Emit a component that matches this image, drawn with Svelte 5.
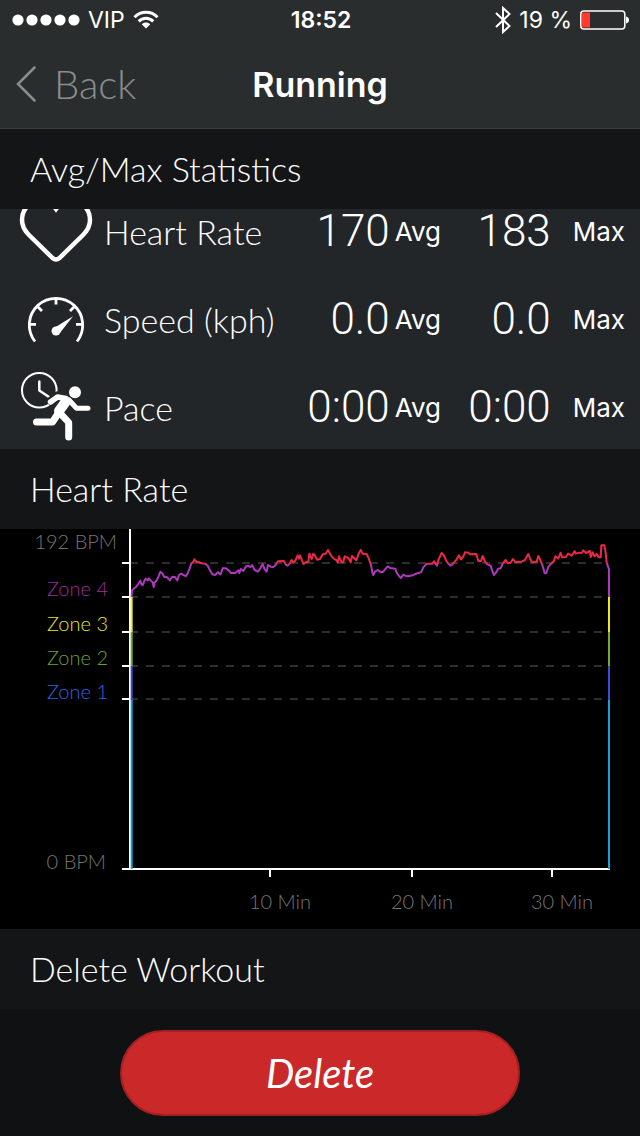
<script>
	const stats = [
		{ icon: 'heart', name: 'Heart Rate', avg: '170', max: '183' },
		{ icon: 'gauge', name: 'Speed (kph)', avg: '0.0', max: '0.0' },
		{ icon: 'runner', name: 'Pace', avg: '0:00', max: '0:00' }
	];

	const zones = [
		{ name: 'Zone 4', y: 67, color: '#9a2f9f' },
		{ name: 'Zone 3', y: 102, color: '#e4e62b' },
		{ name: 'Zone 2', y: 136, color: '#69a52c' },
		{ name: 'Zone 1', y: 170, color: '#2f62e8' }
	];
	const lines = [34, 68, 103, 137, 170];
	const minutes = [
		{ label: '10 Min', x: 270 },
		{ label: '20 Min', x: 412 },
		{ label: '30 Min', x: 552 }
	];

	// time, level: three steps to one chart unit
	const samples = [
		[5, 1014], [5, 195], [6, 178], [12, 172], [18, 168], [24, 160], [31, 149], [34, 160], [38, 162], [43, 150],
		[47, 143], [53, 148], [57, 142], [63, 150], [68, 153], [71, 168], [74, 155], [80, 148], [85, 138], [91, 122],
		[97, 127], [103, 138], [110, 138], [120, 148], [127, 137], [135, 138], [142, 148], [147, 132], [154, 128],
		[160, 132], [168, 135], [174, 125], [179, 112], [184, 97], [189, 94], [193, 85], [199, 92], [206, 93],
		[214, 97], [226, 98], [233, 104], [240, 118], [247, 130], [255, 132], [264, 124], [272, 130], [278, 112],
		[288, 112], [296, 118], [303, 126], [316, 126], [325, 118], [328, 126], [332, 114], [340, 120], [348, 106],
		[355, 105], [362, 108], [366, 102], [374, 117], [384, 122], [391, 112], [398, 99], [403, 113], [410, 122],
		[414, 102], [422, 107], [430, 108], [437, 102], [444, 91], [462, 90], [467, 101], [473, 104], [479, 98],
		[485, 87], [490, 94], [496, 89], [503, 73], [507, 83], [510, 73], [516, 88], [521, 99], [528, 93], [535, 93],
		[538, 68], [545, 84], [550, 68], [555, 74], [561, 86], [570, 84], [578, 70], [587, 68], [594, 57], [600, 68],
		[605, 76], [613, 84], [620, 88], [623, 95], [627, 76], [635, 94], [640, 93], [644, 76], [655, 81], [662, 94],
		[666, 75], [675, 84], [679, 88], [685, 70], [692, 57], [698, 68], [710, 69], [716, 82], [723, 102],
		[727, 125], [730, 132], [735, 122], [743, 117], [753, 124], [760, 122], [766, 114], [773, 106], [780, 111],
		[796, 113], [800, 125], [807, 135], [813, 141], [820, 131], [827, 135], [835, 136], [848, 133], [858, 128],
		[873, 124], [880, 109], [890, 98], [907, 98], [912, 91], [921, 104], [926, 85], [935, 66], [942, 73],
		[947, 86], [954, 97], [963, 104], [972, 95], [980, 85], [987, 73], [993, 85], [1000, 76], [1005, 64],
		[1015, 65], [1020, 70], [1039, 69], [1045, 90], [1053, 90], [1058, 75], [1065, 92], [1072, 100], [1082, 104],
		[1087, 120], [1092, 132], [1100, 122], [1104, 113], [1112, 112], [1118, 98], [1127, 87], [1133, 97],
		[1142, 95], [1149, 84], [1156, 93], [1175, 92], [1185, 87], [1195, 69], [1201, 84], [1206, 94], [1220, 92],
		[1225, 75], [1233, 92], [1239, 108], [1244, 127], [1249, 126], [1255, 108], [1263, 98], [1272, 90],
		[1276, 76], [1285, 82], [1292, 65], [1296, 79], [1308, 78], [1314, 68], [1325, 74], [1334, 60], [1337, 68],
		[1347, 65], [1355, 66], [1360, 58], [1368, 66], [1380, 60], [1382, 78], [1388, 64], [1393, 76], [1400, 69],
		[1406, 79], [1412, 79], [1414, 43], [1423, 43], [1427, 65], [1430, 95], [1437, 115], [1437, 1014]
	];
	const points = samples.map(([t, v]) => `${130 + t / 3},${2 + v / 3}`).join(' ');
</script>

<div class="screen">
	<header>
		<div class="status">
			<div class="carrier">
				<svg width="68" height="12" viewBox="0 0 68 12" fill="#fff" aria-hidden="true">
					{#each [0, 1, 2, 3, 4] as dot}
						<circle cx={6 + dot * 14} cy="6" r="5.6" />
					{/each}
				</svg>
				<span>VIP</span>
				<svg width="26" height="20" viewBox="0 0 26 20" fill="none" stroke="#fff" stroke-width="3" aria-hidden="true">
					<path d="M1.5 7.2C8 .7 18 .7 24.500 7.200" />
					<path d="M5.700 11.400C10 7.200 16 7.200 20.300 11.400" />
					<path d="M8.700 14.300C11.200 12 14.800 12 17.300 14.300L13 18.600Z" fill="#fff" stroke="none" />
				</svg>
			</div>
			<strong>18:52</strong>
			<div class="power">
				<svg width="16" height="28" viewBox="0 0 16 28" fill="none" stroke="#fff" stroke-width="2" aria-hidden="true">
					<path d="M1 7L14.500 20L8 26V2L14.500 8L1 21" />
				</svg>
				<span>19 %</span>
				<svg width="50" height="20" viewBox="0 0 50 20" aria-hidden="true">
					<rect x=".8" y="1" width="44" height="18" rx="3" fill="none" stroke="#fff" stroke-width="1.500" />
					<rect x="2" y="2.500" width="8" height="15" fill="#ff3b30" />
					<path d="M46 6.500C50 7 50 13 46 13.500Z" fill="#fff" />
				</svg>
			</div>
		</div>
		<nav>
			<button class="back" type="button">
				<svg width="20" height="36" viewBox="0 0 20 36" fill="none" stroke="#8b8e8f" stroke-width="2.500" stroke-linecap="round" aria-hidden="true">
					<path d="M18.500 1.500L2 18L18.500 34.500" />
				</svg>
				Back
			</button>
			<h1>Running</h1>
		</nav>
	</header>

	<h2>Avg/Max Statistics</h2>
	<div class="stats">
		<table>
			<tbody>
				{#each stats as stat}
					<tr>
						<td class="icon">
							<svg width="80" height="88" viewBox="0 0 80 88" fill="none" stroke="#fff" aria-hidden="true">
								{#if stat.icon === 'heart'}
									<path stroke-width="4.500" d="M36.500 71L13 48C7 42 6 38 6 33C6 22 14 14 24 14C31 14 37 18 40 22C43 18 49 14 56 14C66 14 74 22 74 33C74 38 73 42 67 48L43.500 71Q40 74 36.500 71Z" />
								{:else if stat.icon === 'gauge'}
									<path stroke-width="2.800" d="M19 66.500A26.700 26.700 0 1 1 61 66.500" />
									<path stroke-width="2.800" d="M14 49.300H20M60 49.300H66M40 23V29.500M21.500 31.500L26 36M58.500 31.500L54 36" />
									<path fill="#fff" stroke="none" d="M57 41.300L43.500 58.500L38 53Z" />
									<circle cx="40" cy="56" r="4.500" fill="#fff" stroke="none" />
								{:else}
									<circle cx="23.300" cy="27.300" r="17.300" stroke-width="2" />
									<path stroke-width="2.500" stroke-linecap="round" stroke-linejoin="round" d="M23.300 18.500V27.500L33 34" />
									<path stroke="#232629" stroke-width="9" d="M32 40.500L41.500 33L46 32" />
									<g stroke-linecap="round" stroke-linejoin="round">
										<path stroke-width="5.500" d="M34.500 39L41.500 34L50 35.500" />
										<path stroke-width="5" d="M53 37L60.500 45.300H72" />
										<path stroke-width="10" d="M49.500 39L43 48" />
										<path stroke-width="7" d="M42.500 50L36.500 59H20.500" />
										<path stroke-width="7" d="M44 50L52.700 59.500V74" />
									</g>
									<circle cx="59" cy="29.300" r="6" fill="#fff" stroke="none" />
								{/if}
							</svg>
						</td>
						<th scope="row">{stat.name}</th>
						<td><div class="value">{stat.avg}<span class="unit avg">Avg</span></div></td>
						<td class="last"><div class="value">{stat.max}<span class="unit max">Max</span></div></td>
					</tr>
				{/each}
			</tbody>
		</table>
	</div>

	<h2>Heart Rate</h2>
	<svg class="chart" viewBox="0 0 640 400" role="img" aria-label="Heart Rate">
		<defs>
			<linearGradient id="zones" gradientUnits="userSpaceOnUse" x1="0" y1="0" x2="0" y2="340">
				<stop offset="10.300%" stop-color="#ee2747" />
				<stop offset="10.300%" stop-color="#ae38bd" />
				<stop offset="20%" stop-color="#ae38bd" />
				<stop offset="20%" stop-color="#eaec1f" />
				<stop offset="30.400%" stop-color="#eaec1f" />
				<stop offset="30.400%" stop-color="#6fae2e" />
				<stop offset="40.300%" stop-color="#6fae2e" />
				<stop offset="40.300%" stop-color="#3450dc" />
				<stop offset="50.300%" stop-color="#3450dc" />
				<stop offset="50.300%" stop-color="#10a3dc" />
			</linearGradient>
		</defs>
		{#each lines as y}
			<path class="grid" d="M130 {y}H608" />
			<path class="axis" d="M122 {y}H130" />
		{/each}
		<path class="axis" d="M130 0V340M122 340H610" />
		{#each minutes as minute}
			<path class="axis" d="M{minute.x} 340V348" />
			<text x={minute.x + 10} y="380" text-anchor="middle">{minute.label}</text>
		{/each}
		<polyline {points} />
		<text x="117" y="20" text-anchor="end">192 BPM</text>
		{#each zones as zone}
			<text class="zone" x="108" y={zone.y} text-anchor="end" fill={zone.color}>{zone.name}</text>
		{/each}
		<text x="106" y="340" text-anchor="end">0 BPM</text>
	</svg>

	<h2>Delete Workout</h2>
	<footer>
		<button class="delete" type="button">Delete</button>
	</footer>
</div>

<style>
	:global(body) {
		margin: 0;
		background: #0f1113;
	}
	.screen {
		color: #fff;
		font-family: Lato, 'Open Sans', sans-serif;
		font-weight: 300;
	}
	header {
		background: #2a2d2e;
		border-bottom: 1px solid #3a3c3d;
		font-family: Inter, Roboto, sans-serif;
	}
	.status {
		display: grid;
		grid-template-columns: 1fr auto 1fr;
		align-items: center;
		height: 40px;
		padding: 0 10px 0 12px;
		font-size: 23px;
		font-weight: 400;
	}
	.status strong {
		font-weight: 600;
	}
	.carrier, .power {
		display: flex;
		align-items: center;
		gap: 8px;
	}
	.power {
		justify-content: flex-end;
	}
	nav {
		display: grid;
		grid-template-columns: 1fr auto 1fr;
		align-items: center;
		height: 88px;
		padding: 0 16px;
	}
	button {
		font-family: Lato, 'Open Sans', sans-serif;
		font-weight: 300;
		font-size: 40px;
		cursor: pointer;
	}
	.back {
		display: flex;
		align-items: center;
		gap: 18px;
		padding: 0;
		border: 0;
		background: none;
		color: #8b8e8f;
	}
	h1 {
		margin: 0;
		font-size: 34px;
		font-weight: 600;
	}
	h2 {
		margin: 0;
		padding: 0 30px;
		background: #141517;
		font-size: 34px;
		font-weight: 300;
		line-height: 80px;
	}
	.stats {
		height: 240px;
		overflow: hidden;
		background: #232629;
	}
	table {
		width: 100%;
		margin-top: -22px;
		border-collapse: collapse;
	}
	td, th {
		height: 88px;
		padding: 0;
	}
	.icon {
		width: 88px;
		padding-left: 16px;
	}
	.icon svg {
		display: block;
	}
	th {
		font-size: 34px;
		font-weight: 300;
		text-align: left;
	}
	.last {
		width: 184px;
		padding-right: 15px;
	}
	.value {
		display: flex;
		align-items: center;
		justify-content: flex-end;
		font-family: Roboto, sans-serif;
		font-size: 44px;
	}
	.unit {
		font-family: Inter, Roboto, sans-serif;
		font-size: 26px;
		font-weight: 400;
	}
	.avg {
		margin-left: 5px;
	}
	.max {
		margin-left: 22px;
	}
	.chart {
		display: block;
		width: 100%;
		background: #000;
	}
	.chart text {
		font-size: 20px;
	}
	.chart text:not(.zone) {
		fill: #757575;
	}
	.axis {
		stroke: #fff;
		stroke-width: 2;
	}
	.grid {
		stroke: #5c5c5c;
		stroke-width: 1;
		stroke-dasharray: 8;
	}
	polyline {
		fill: none;
		stroke: url(#zones);
		stroke-width: 2;
		stroke-linejoin: round;
	}
	footer {
		padding: 21px 120px;
		background: #0f1113;
	}
	.delete {
		width: 100%;
		height: 86px;
		border: 2px solid #a41f21;
		border-radius: 43px;
		background: #cb2929;
		color: #fff;
		font-style: italic;
		font-weight: 400;
	}
</style>
